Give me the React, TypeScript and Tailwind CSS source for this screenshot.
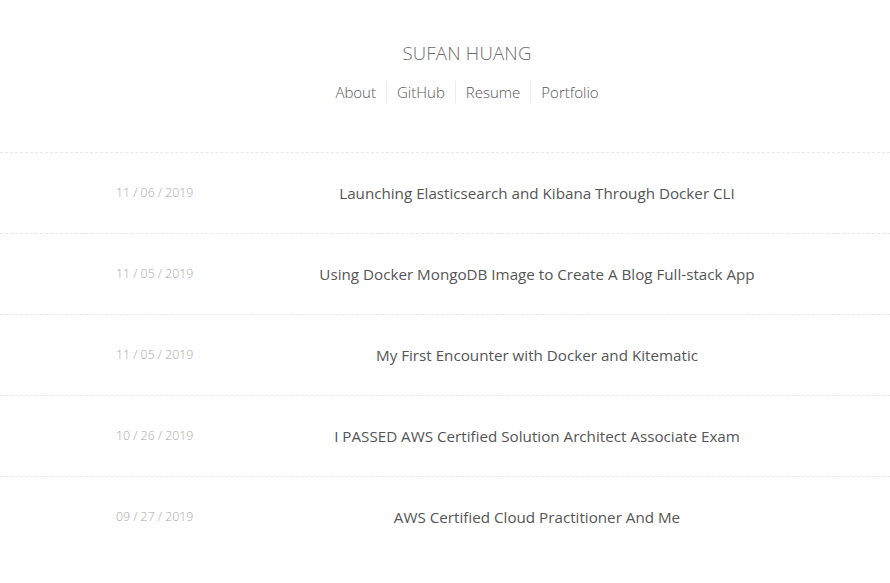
const posts = [
  { date: "11 / 06 / 2019", title: "Launching Elasticsearch and Kibana Through Docker CLI" },
  { date: "11 / 05 / 2019", title: "Using Docker MongoDB Image to Create A Blog Full-stack App" },
  { date: "11 / 05 / 2019", title: "My First Encounter with Docker and Kitematic" },
  { date: "10 / 26 / 2019", title: "I PASSED AWS Certified Solution Architect Associate Exam" },
  { date: "09 / 27 / 2019", title: "AWS Certified Cloud Practitioner And Me" },
];

const links = ["About", "GitHub", "Resume", "Portfolio"];

export default function App() {
  return (
    <div className="min-h-[583px] bg-white font-['Open_Sans',sans-serif]">
      <header className="flex flex-col items-center pl-[44px] pt-[40px]">
        <h1 className="text-[18.6px] font-light tracking-[0.2px] text-[#6b6b6b] leading-[26px]">
          SUFAN HUANG
        </h1>
        <nav className="mt-[15px] flex items-center">
          {links.map((link, i) => (
            <a
              key={link}
              href="#"
              className={`px-[10px] text-[15px] font-light leading-[22px] text-[#555] ${
                i > 0 ? "border-l border-[#ececec]" : ""
              }`}
            >
              {link}
            </a>
          ))}
        </nav>
      </header>

      <ul className="mt-[49px]">
        {posts.map((post, i) => (
          <li
            key={i}
            className="flex h-[81px] items-center border-t border-dashed border-[#e8e8e8]"
          >
            <span className="w-[300px] pl-[116px] text-[12.3px] font-light text-[#a8a8a8]">
              {post.date}
            </span>
            <a href="#" className="w-[474px] text-center text-[15.2px] text-[#555]">
              {post.title}
            </a>
          </li>
        ))}
      </ul>
    </div>
  );
}
